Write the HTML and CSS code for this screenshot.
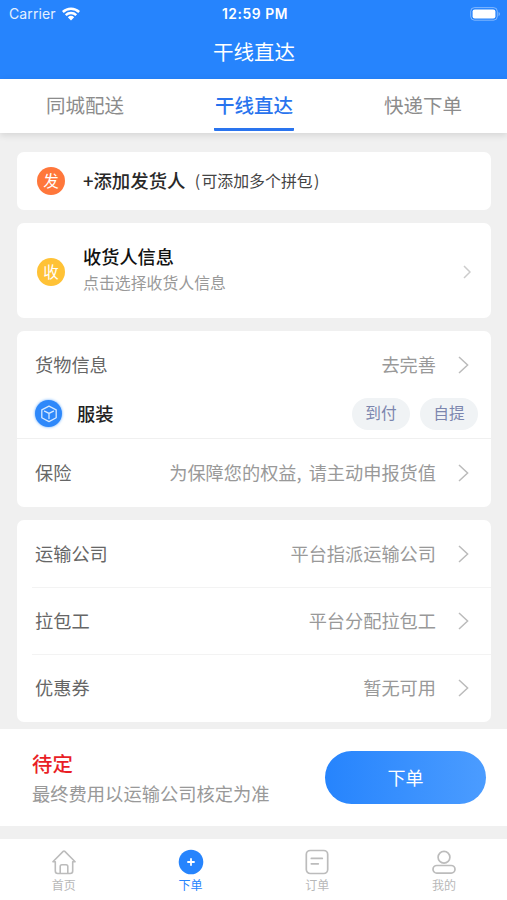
FILE: index.html
```html
<!DOCTYPE html>
<html lang="zh-CN">
<head>
<meta charset="utf-8">
<title>干线直达</title>
<link rel="stylesheet" href="styles.css">
</head>
<body>
<div class="app">
  <header class="header">
    <div class="status">
      <div class="carrier"><span>Carrier</span>
        <svg width="18" height="14" viewBox="0 0 18 14"><path d="M0 4.1A13 13 0 0 1 18 4.1L16.3 5.9A10.6 10.6 0 0 0 1.7 5.9ZM2.9 7.2A9 9 0 0 1 15.1 7.2L13.4 9A6.5 6.5 0 0 0 4.6 9ZM5.8 10.2A4.8 4.8 0 0 1 12.2 10.2L9 13.6Z" fill="#fff"/></svg>
      </div>
      <div class="time">12:59 PM</div>
      <div class="battery">
        <svg width="31" height="14" viewBox="0 0 31 14"><rect x=".7" y=".6" width="26.6" height="12.6" rx="3.8" fill="none" stroke="#fff" stroke-opacity=".42"/><rect x="2.6" y="2.4" width="22.8" height="9" rx="2.2" fill="#fff"/><path d="M28.6 5v4.2c1.6-.6 1.6-3.6 0-4.2z" fill="#fff" fill-opacity=".5"/></svg>
      </div>
    </div>
    <h1 class="title">干线直达</h1>
  </header>
  <nav class="tabs">
    <div class="tab"><span>同城配送</span></div>
    <div class="tab active"><span>干线直达</span></div>
    <div class="tab"><span>快递下单</span></div>
  </nav>
  <main class="content">
    <section class="card sender">
      <span class="badge orange">发</span>
      <p class="add"><b>+添加发货人</b><span class="hint"><i>(</i>可添加多个拼包<i>)</i></span></p>
    </section>
    <section class="card receiver">
      <span class="badge yellow">收</span>
      <div class="info"><h2>收货人信息</h2><p>点击选择收货人信息</p></div>
      <svg class="small-arrow" width="8" height="14" viewBox="0 0 8 14"><path d="M1 1l6 6-6 6" fill="none" stroke="#ccc" stroke-width="1.5"/></svg>
    </section>
    <section class="card goods">
      <div class="row goods-head"><span class="label">货物信息</span><span class="value">去完善</span><svg class="arrow" viewBox="0 0 11 18"><path d="M1 1l8.6 8L1 17"/></svg></div>
      <div class="goods-item">
        <span class="cube"><svg width="18" height="18" viewBox="0 0 18 18"><path d="M9 1.2l7.2 3.6v8L9 16.6l-7.2-3.8v-8zM4.5 6.1L9 8.4l4.5-2.3M9 8.4v5.2" fill="none" stroke="#d6e9ff" stroke-width="1.3" stroke-linejoin="round" stroke-linecap="round"/></svg></span>
        <b>服装</b>
        <span class="tag">到付</span><span class="tag">自提</span>
      </div>
      <div class="row insurance"><span class="label">保险</span><span class="value">为保障您的权益, 请主动申报货值</span><svg class="arrow" viewBox="0 0 11 18"><path d="M1 1l8.6 8L1 17"/></svg></div>
    </section>
    <section class="card options">
      <div class="row"><span class="label">运输公司</span><span class="value">平台指派运输公司</span><svg class="arrow" viewBox="0 0 11 18"><path d="M1 1l8.6 8L1 17"/></svg></div>
      <div class="row"><span class="label">拉包工</span><span class="value">平台分配拉包工</span><svg class="arrow" viewBox="0 0 11 18"><path d="M1 1l8.6 8L1 17"/></svg></div>
      <div class="row"><span class="label">优惠券</span><span class="value">暂无可用</span><svg class="arrow" viewBox="0 0 11 18"><path d="M1 1l8.6 8L1 17"/></svg></div>
    </section>
  </main>
  <section class="checkout">
    <div class="price"><b>待定</b><p>最终费用以运输公司核定为准</p></div>
    <button class="submit">下单</button>
  </section>
  <footer class="tabbar">
    <div class="item"><svg width="26" height="26" viewBox="0 0 26 26"><path d="M4.3 12.8H1.9L12.2 2.4q.8-.8 1.6 0L24.1 12.8h-2.4V22q0 2.5-2.5 2.5H6.8Q4.3 24.5 4.3 22zM9.2 24.5v-7q0-1.7 1.7-1.7h4.2q1.7 0 1.7 1.7v7" fill="none" stroke="#bcbcbc" stroke-width="1.6" stroke-linejoin="round"/></svg><span>首页</span></div>
    <div class="item on"><svg width="26" height="26" viewBox="0 0 26 26"><circle cx="13" cy="13" r="12.3" fill="#2684fd"/><path d="M13 9.3v7.4M9.3 13h7.4" stroke="#fff" stroke-width="1.8"/></svg><span>下单</span></div>
    <div class="item"><svg width="26" height="26" viewBox="0 0 26 26"><rect x="2.3" y="1.5" width="21.4" height="23" rx="4" fill="none" stroke="#bcbcbc" stroke-width="1.7"/><path d="M7.3 9.4h11M7.3 14.8h7" stroke="#bcbcbc" stroke-width="1.7" stroke-linecap="round"/></svg><span>订单</span></div>
    <div class="item"><svg width="26" height="26" viewBox="0 0 26 26"><circle cx="13" cy="8.3" r="5.9" fill="none" stroke="#bcbcbc" stroke-width="1.7"/><rect x="2" y="16.5" width="22" height="7.6" rx="3.8" fill="none" stroke="#bcbcbc" stroke-width="1.7"/></svg><span>我的</span></div>
  </footer>
</div>
</body>
</html>
```

FILE: styles.css
```css
* { box-sizing: border-box; margin: 0; padding: 0; }
body { font-family: "Noto Sans CJK SC", sans-serif; background: #f0f0f0; color: #333; }
.app { width: 507px; height: 900px; display: flex; flex-direction: column; overflow: hidden; }
b, h2 { font-weight: 500; }

.header { height: 79px; flex: none; background: #2684fd; color: #fff; }
.status { height: 27px; display: flex; align-items: center; justify-content: space-between; padding: 0 6px 0 9px; font-family: Inter, sans-serif; }
.carrier, .battery { flex: 1; display: flex; align-items: center; }
.carrier { gap: 6px; font-size: 14px; letter-spacing: .1px; color: #e4f0ff; }
.battery { justify-content: flex-end; }
.time { font-size: 13.8px; font-weight: 600; letter-spacing: .6px; }
.title { height: 49px; line-height: 49px; padding-left: 1px; text-align: center; font-size: 20.5px; font-weight: 400; }

.tabs { height: 54px; flex: none; display: grid; grid-template-columns: repeat(3, 1fr); background: #fff; box-shadow: 0 2px 7px rgba(0, 0, 0, .12); }
.tab { display: flex; justify-content: center; padding-left: 1px; font-size: 19.5px; color: #8c8c8c; }
.tab span { height: 52px; line-height: 52px; padding: 0 1px; }
.active { color: #2a74ee; font-weight: 500; }
.active span { border-bottom: 3px solid #2a74ee; border-radius: 1px; }

.content { height: 596px; flex: none; padding: 19px 16px 0 17px; display: flex; flex-direction: column; gap: 13px; }
.card { background: #fff; border-radius: 7px; flex: none; }
.sender { height: 58px; display: flex; align-items: center; padding-left: 20px; }
.badge { width: 28px; height: 28px; border-radius: 50%; flex: none; color: #fff; font-size: 15.5px; line-height: 26px; text-align: center; }
.orange { background: #ff773b; }
.yellow { background: #ffc236; }
.add { margin: -2px 0 0 18px; display: flex; align-items: center; font-size: 18.4px; line-height: 28px; color: #292929; }
.hint { font-size: 15.9px; margin: 1px 0 0 8px; color: #444; }
.hint i { display: inline-block; width: 8px; text-align: center; font-style: normal; }
.receiver { height: 95px; display: flex; align-items: center; padding: 2px 20px 0 20px; }
.info { margin: -4px 0 0 18px; flex: 1; }
.info h2 { font-size: 18.2px; line-height: 27px; color: #111; }
.info p { font-size: 15.9px; line-height: 26px; color: #999; }

.goods { height: 176px; }
.row { display: flex; align-items: center; height: 67px; padding: 0 22px 0 18px; font-size: 18.2px; }
.label, .value { margin-bottom: 2px; }
.label { color: #666; }
.value { margin-left: auto; color: #999; word-spacing: 3px; }
.arrow { width: 11px; height: 18px; margin-left: 22px; fill: none; stroke: #bbb; stroke-width: 1.5; }
.goods-item { height: 41px; display: flex; align-items: center; gap: 10px; padding: 0 13px 9px 18px; border-bottom: 1px solid #f0f0f0; }
.goods-item b { font-size: 18.2px; color: #222; margin: -2px auto 0 5px; }
.cube { width: 27px; height: 27px; border-radius: 50%; background: #2e88fa; box-shadow: 0 0 3px #5aa5ff; display: flex; align-items: center; justify-content: center; }
.tag { width: 58px; height: 32px; border-radius: 16px; background: #f0f3f5; color: #7c86ae; font-size: 15.7px; line-height: 30px; text-align: center; }
.options { height: 202px; }
.options .row + .row { margin-left: 15px; padding-left: 3px; border-top: 1px solid #f3f3f3; }

.checkout { height: 97px; flex: none; background: #fff; display: flex; align-items: center; justify-content: space-between; padding: 0 21px 0 32px; }
.price b { display: block; font-size: 20.4px; line-height: 30px; color: #e91e26; }
.price p { font-size: 18.3px; line-height: 30px; color: #999; }
.submit { width: 161px; height: 53px; padding-bottom: 2px; border: 0; border-radius: 27px; background: linear-gradient(90deg, #2684fd, #4b9cff); color: #fff; font: 400 18px "Noto Sans CJK SC", sans-serif; }

.tabbar { height: 61px; margin-top: 13px; flex: none; background: #fff; display: grid; grid-template-columns: repeat(4, 1fr); }
.item { display: flex; flex-direction: column; align-items: center; padding: 10px 0 0 1px; font-size: 12px; line-height: 20px; color: #b8b8b8; }
.on { color: #2684fd; }
```
